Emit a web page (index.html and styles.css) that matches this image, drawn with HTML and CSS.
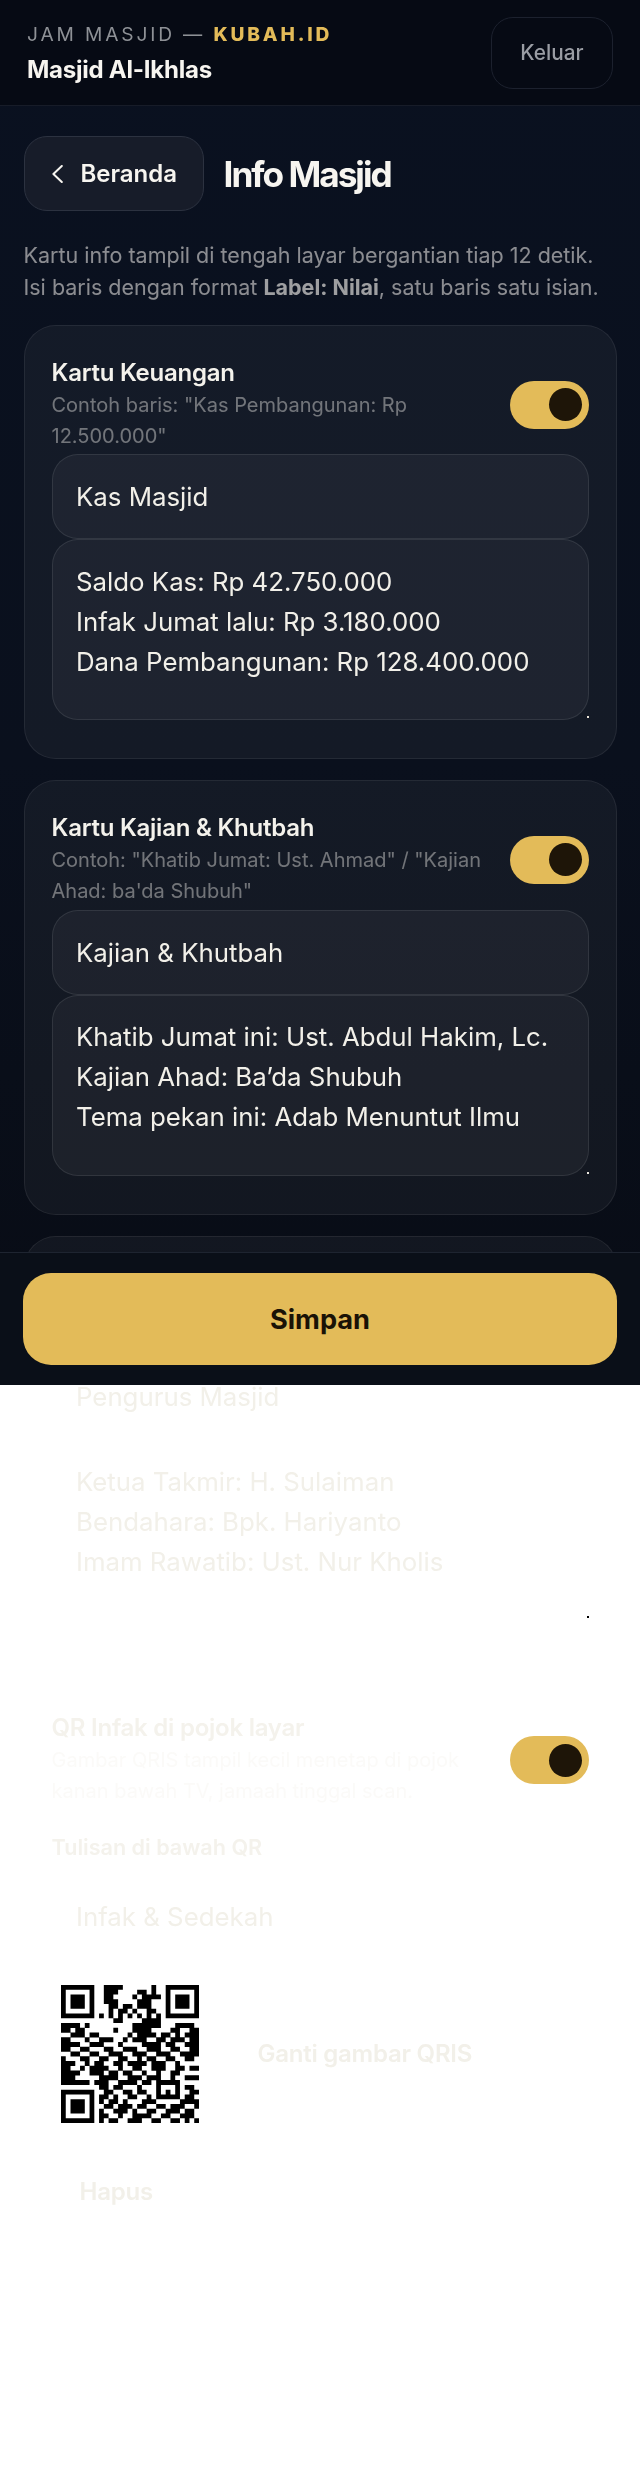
FILE: index.html
```html
<!DOCTYPE html>
<html lang="id">
<head>
<meta charset="utf-8">
<title>Info Masjid</title>
<link rel="stylesheet" href="styles.css">
</head>
<body>
<div class="app">
  <header class="topbar">
    <div class="brand">
      <div class="eyebrow">JAM MASJID — <b>KUBAH.ID</b></div>
      <div class="mosque">Masjid Al-Ikhlas</div>
    </div>
    <button class="logout">Keluar</button>
  </header>
  <main class="main">
    <div class="titlerow">
      <button class="back">
        <svg class="chev" viewBox="0 0 11 18" width="11" height="18"><path d="M9.8 1 1.4 9l8.4 8" fill="none" stroke="currentColor" stroke-width="2" stroke-linecap="round" stroke-linejoin="round"/></svg>
        Beranda
      </button>
      <h1>Info Masjid</h1>
    </div>
    <p class="intro">Kartu info tampil di tengah layar bergantian tiap 12 detik. Isi baris dengan format <strong>Label: Nilai</strong>, satu baris satu isian.</p>

    <section class="card">
      <div class="cardhead">
        <div class="cardtext">
          <div class="cardtitle">Kartu Keuangan</div>
          <div class="sub">Contoh baris: "Kas Pembangunan: Rp 12.500.000"</div>
        </div>
        <span class="toggle"><i></i></span>
      </div>
      <div class="field">Kas Masjid</div>
      <div class="area">Saldo Kas: Rp 42.750.000<br>Infak Jumat lalu: Rp 3.180.000<br>Dana Pembangunan: Rp 128.400.000</div>
    </section>

    <section class="card">
      <div class="cardhead">
        <div class="cardtext">
          <div class="cardtitle">Kartu Kajian &amp; Khutbah</div>
          <div class="sub">Contoh: "Khatib Jumat: Ust. Ahmad" / "Kajian Ahad: ba'da Shubuh"</div>
        </div>
        <span class="toggle"><i></i></span>
      </div>
      <div class="field">Kajian &amp; Khutbah</div>
      <div class="area">Khatib Jumat ini: Ust. Abdul Hakim, Lc.<br>Kajian Ahad: Ba’da Shubuh<br>Tema pekan ini: Adab Menuntut Ilmu</div>
    </section>

    <section class="card">
      <div class="cardhead short">
        <div class="cardtext">
          <div class="cardtitle">Kartu Pengurus</div>
          <div class="sub">Contoh: "Ketua Takmir: H. Sulaiman"</div>
        </div>
        <span class="toggle"><i></i></span>
      </div>
      <div class="field">Pengurus Masjid</div>
      <div class="area">Ketua Takmir: H. Sulaiman<br>Bendahara: Bpk. Hariyanto<br>Imam Rawatib: Ust. Nur Kholis</div>
    </section>

    <section class="card">
      <div class="cardhead">
        <div class="cardtext">
          <div class="cardtitle">QR Infak di pojok layar</div>
          <div class="sub">Gambar QRIS tampil kecil menetap di pojok kanan bawah TV, jamaah tinggal scan.</div>
        </div>
        <span class="toggle"><i></i></span>
      </div>
      <div class="label">Tulisan di bawah QR</div>
      <div class="field">Infak &amp; Sedekah</div>
      <div class="qrrow">
        <div class="qrbox">
          <svg class="qr" viewBox="0 0 29 29" width="138" height="138">
            <path fill="none" stroke="#000" stroke-width="1.02" d="M0 .5h7M9 .5h4M19 .5h1M22 .5h7
M0 1.5h1M6 1.5h1M9 1.5h3M16 1.5h2M19 1.5h1M22 1.5h1M28 1.5h1
M0 2.5h1M2 2.5h3M6 2.5h1M9 2.5h2M15 2.5h1M17 2.5h4M22 2.5h1M24 2.5h3M28 2.5h1
M0 3.5h1M2 3.5h3M6 3.5h1M9 3.5h3M16 3.5h3M22 3.5h1M24 3.5h3M28 3.5h1
M0 4.5h1M2 4.5h3M6 4.5h1M10 4.5h2M13 4.5h2M16 4.5h3M22 4.5h1M24 4.5h3M28 4.5h1
M0 5.5h1M6 5.5h1M10 5.5h1M12 5.5h2M15 5.5h1M18 5.5h2M22 5.5h1M28 5.5h1
M0 6.5h7M8 6.5h1M10 6.5h1M12 6.5h1M14 6.5h1M16 6.5h1M18 6.5h1M20 6.5h1M22 6.5h7
M11 7.5h2M17 7.5h4
M0 8.5h4M5 8.5h1M15 8.5h6M24 8.5h4
M0 9.5h2M3 9.5h2M11 9.5h1M15 9.5h4M23 9.5h2M27 9.5h2
M2 10.5h3M6 10.5h2M14 10.5h1M16 10.5h4M21 10.5h2M24 10.5h1M26 10.5h3
M0 11.5h2M5 11.5h1M8 11.5h3M13 11.5h1M15 11.5h3M20 11.5h2M23 11.5h3M27 11.5h2
M0 12.5h4M6 12.5h3M12 12.5h1M17 12.5h4M22 12.5h2M26 12.5h3
M0 13.5h2M4 13.5h2M9 13.5h2M13 13.5h3M18 13.5h3M23 13.5h2M27 13.5h2
M2 14.5h2M6 14.5h2M10 14.5h3M15 14.5h3M20 14.5h3M25 14.5h4
M0 15.5h1M4 15.5h2M8 15.5h2M12 15.5h2M16 15.5h1M18 15.5h2M22 15.5h2M26 15.5h2
M0 16.5h3M5 16.5h1M7 16.5h2M11 16.5h2M14 16.5h4M19 16.5h3M24 16.5h1
M0 17.5h2M4 17.5h1M6 17.5h4M12 17.5h1M15 17.5h2M19 17.5h3M24 17.5h2M27 17.5h2
M0 18.5h4M6 18.5h3M10 18.5h2M13 18.5h2M17 18.5h1M20 18.5h1M23 18.5h2
M0 19.5h3M8 19.5h4M14 19.5h3M18 19.5h3M23 19.5h1M26 19.5h3
M0 20.5h6M7 20.5h3M12 20.5h4M17 20.5h2M20 20.5h5
M8 21.5h2M11 21.5h2M16 21.5h1M20 21.5h1M24 21.5h1M26 21.5h2
M0 22.5h7M9 22.5h2M13 22.5h2M16 22.5h2M20 22.5h1M22 22.5h1M24 22.5h1M27 22.5h2
M0 23.5h1M6 23.5h1M8 23.5h2M11 23.5h1M14 23.5h2M18 23.5h1M20 23.5h5M26 23.5h2
M0 24.5h1M2 24.5h3M6 24.5h1M8 24.5h1M10 24.5h2M13 24.5h1M17 24.5h3M25 24.5h4
M0 25.5h1M2 25.5h3M6 25.5h1M9 25.5h2M12 25.5h3M16 25.5h2M20 25.5h2M23 25.5h3M28 25.5h1
M0 26.5h1M2 26.5h3M6 26.5h1M8 26.5h1M11 26.5h3M15 26.5h1M18 26.5h2M22 26.5h3M26 26.5h2
M0 27.5h1M6 27.5h1M8 27.5h2M12 27.5h1M15 27.5h4M21 27.5h2M25 27.5h3
M0 28.5h7M8 28.5h1M10 28.5h2M14 28.5h3M19 28.5h2M23 28.5h2M26 28.5h1M28 28.5h1"/>
          </svg>
        </div>
        <button class="ghost">Ganti gambar QRIS</button>
      </div>
      <button class="ghost remove">Hapus</button>
    </section>
  </main>
  <footer class="savebar">
    <button class="save">Simpan</button>
  </footer>
</div>
</body>
</html>
```

FILE: styles.css
```css
* { box-sizing: border-box; }
html { background: #fff; }
body { margin: 0; min-height: 2491px; font-family: Inter, "Liberation Sans", sans-serif; color: #f4f2ec; }
button { font-family: inherit; margin: 0; }

.app { height: 1385px; display: flex; flex-direction: column; background: linear-gradient(180deg, #0a1120 0%, #0a101d 55%, #080c15 100%); }

.topbar { flex: none; height: 106px; padding: 17px 27px 17px; display: flex; justify-content: space-between; align-items: center; background: #060a14; border-bottom: 1px solid #171c28; }
.brand { display: flex; flex-direction: column; }
.eyebrow { font-size: 19.2px; line-height: 28px; letter-spacing: 2.85px; color: #8e9196; white-space: nowrap; }
.eyebrow b { font-weight: 800; color: #e3bb59; }
.mosque { font-size: 24px; line-height: 31px; margin-top: 6px; font-weight: 700; letter-spacing: -0.01em; color: #f7f5f0; }
.logout { width: 122px; height: 72px; background: transparent; border: 1px solid #1c212e; border-radius: 22px; color: #9a9da4; font-size: 20.8px; font-weight: 500; }

.main { flex: 1; min-height: 0; padding: 30px 23.5px 0; }
.titlerow { display: flex; align-items: center; gap: 20px; }
.back { display: flex; align-items: center; gap: 18px; width: 180px; height: 75px; padding: 0 0 0 27px; background: #171c29; border: 1.5px solid #2c3240; border-radius: 23px; color: #f7f5f0; font-size: 24px; font-weight: 600; }
.chev { flex: none; }
h1 { margin: 0; font-size: 35.2px; font-weight: 700; letter-spacing: -2px; color: #f7f5f0; }
.intro { margin: 28px 0 21px; font-size: 21.5px; line-height: 32.4px; color: rgba(245, 243, 238, 0.55); }
.intro strong { font-weight: 700; color: rgba(245, 243, 238, 0.63); }

.card { margin-bottom: 21px; padding: 32px 27px 38px; background: rgba(255, 255, 255, 0.045); border: 1.5px solid rgba(255, 255, 255, 0.07); border-radius: 32px; }
.cardhead { display: flex; align-items: center; gap: 16px; margin-bottom: 3px; }
.cardhead.short { padding-bottom: 20px; }
.cardtext { flex: 1; min-width: 0; }
.cardtitle { font-size: 24px; line-height: 29px; font-weight: 600; letter-spacing: -0.01em; color: #f4f2ec; }
.sub { margin-top: 3px; font-size: 20px; line-height: 30.7px; color: rgba(245, 243, 238, 0.42); }
.toggle { flex: none; width: 79px; height: 48px; padding: 7px; display: flex; justify-content: flex-end; background: #e3bb59; border-radius: 24px; }
.toggle i { display: block; width: 33px; height: 33px; margin-top: 0.5px; background: #1e1508; border-radius: 50%; }

.field { height: 85px; padding: 0 23.5px; display: flex; align-items: center; background: rgba(255, 255, 255, 0.045); border: 1.5px solid rgba(255, 255, 255, 0.09); border-radius: 26px; font-size: 25.8px; color: #f2f0e9; }
.area { position: relative; height: 181px; padding: 21.5px 23.5px; background: rgba(255, 255, 255, 0.045); border: 1.5px solid rgba(255, 255, 255, 0.09); border-radius: 26px; font-size: 25.8px; line-height: 40px; color: #f2f0e9; }
.area::after { content: ""; position: absolute; right: -1px; bottom: 1px; width: 2px; height: 2px; background: #fff; mix-blend-mode: difference; }

.label { margin-top: 27px; margin-bottom: 13px; font-size: 21.6px; line-height: 27px; font-weight: 600; }
.qrrow { display: flex; align-items: center; gap: 15px; margin-top: 17px; }
.qrbox { flex: none; width: 156px; height: 156px; padding: 9px; background: #fff; border-radius: 12px; }
.qr { display: block; }
.ghost { padding: 0 34px; height: 72px; background: rgba(255, 255, 255, 0.045); border: 1.5px solid rgba(255, 255, 255, 0.09); border-radius: 22px; color: #f2f0e9; font-size: 24px; font-weight: 600; letter-spacing: -0.01em; }
.remove { display: block; margin-top: 24px; padding: 0 27px; }

.savebar { flex: none; position: relative; z-index: 1; height: 133px; padding: 20px 23px; background: #0a0f18; border-top: 1px solid #1e2430; }
.save { display: block; width: 100%; height: 92px; border: 0; border-radius: 28px; background: #e3bb59; color: #1a1206; font-size: 27.2px; font-weight: 700; }
```
